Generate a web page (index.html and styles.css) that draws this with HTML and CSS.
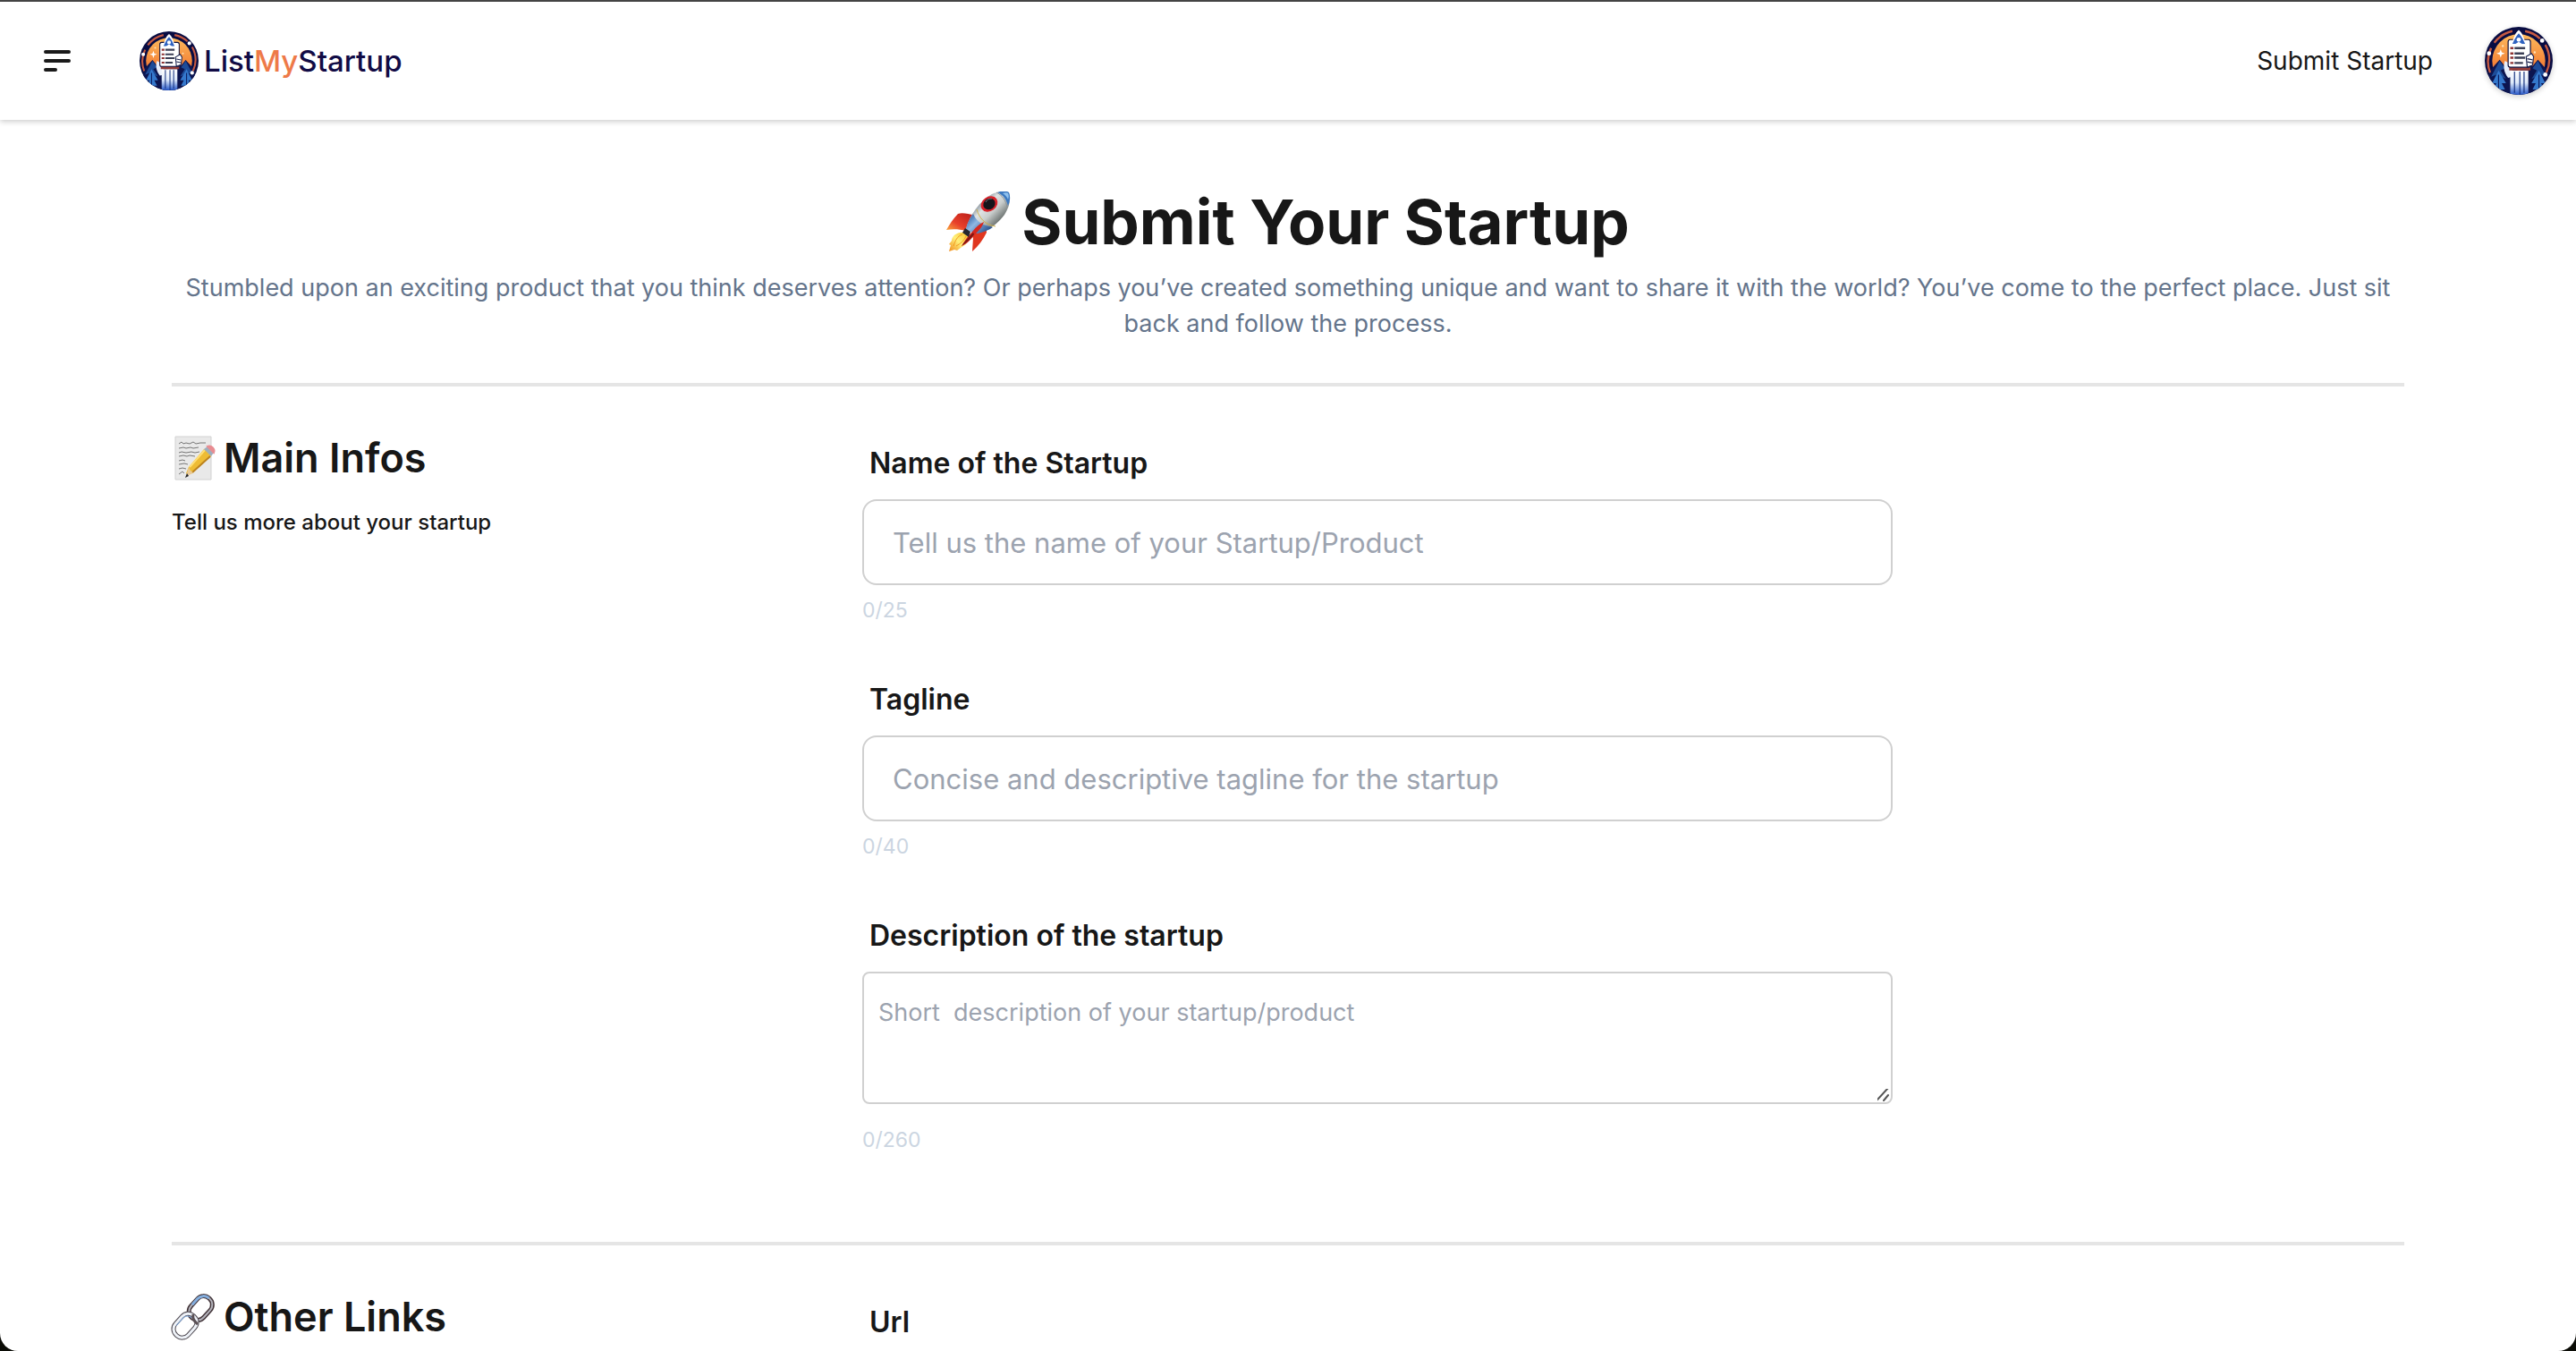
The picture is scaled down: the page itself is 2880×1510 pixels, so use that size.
FILE: index.html
```
<!DOCTYPE html>
<html lang="en">
<head>
	<meta charset="UTF-8">
	<title>ListMyStartup</title>
	<link rel="stylesheet" href="styles.css">
</head>
<body>
	<svg class="sprite" aria-hidden="true">
		<defs>
			<linearGradient id="sky" x1="0" y1="0" x2="0" y2="1">
				<stop offset="0" stop-color="#fdb95c"/>
				<stop offset=".5" stop-color="#f58a3c"/>
				<stop offset="1" stop-color="#dd4a36"/>
			</linearGradient>
			<linearGradient id="trail" x1="0" y1="0" x2="0" y2="1">
				<stop offset="0" stop-color="#fff"/>
				<stop offset=".5" stop-color="#dfeafa"/>
				<stop offset="1" stop-color="#2456c8"/>
			</linearGradient>
			<clipPath id="round"><circle cx="32" cy="32" r="32"/></clipPath>
		</defs>
		<symbol id="badge" viewBox="0 0 64 64">
			<g clip-path="url(#round)">
				<rect width="64" height="64" fill="#080c42"/>
				<circle cx="32" cy="32" r="25" fill="url(#sky)"/>
				<path d="M4 42L14 31l5 6 4-4 9 9 9-9 4 4 5-6 10 11v22H4z" fill="#0c1550"/>
				<path d="M14 32l5 7-4 2 5 8-9-4-5 2zM50 32l-5 7 4 2-5 8 9-4 5 2z" fill="#1d4c98"/>
				<path d="M13 41l7 12h-4l3 6H8l3-6H7zM51 41l-7 12h4l-3 6h11l-3-6h4z" fill="#3478cc"/>
				<path d="M13 45v16M51 45v16" stroke="#0a1c60"/>
				<path d="M5 43A29 29 0 0 1 6 20M9 15A29 29 0 0 1 26 4M38 4a29 29 0 0 1 14 7M57 17a29 29 0 0 1 1 26" fill="none" stroke="#c65a42" stroke-width="2"/>
				<path d="M19 32c-2 5-1 11 3 16l4-1V36z" fill="#e8effb"/>
				<path d="M24 41h17v23H24z" fill="url(#trail)"/>
				<path d="M28 42v20M33 42v22M37 42v20" stroke="#14307e"/>
				<path d="M23 37h20v4H23z" fill="#943c38"/>
				<rect x="22" y="12" width="21" height="26" rx="2" fill="#fff" stroke="#0b0e3c"/>
				<path d="M28 20h10M28 25h9M28 29h10M28 34h8" stroke="#3c4056" stroke-width="2"/>
				<path d="M24 20h3M24 25h3M24 29h3M24 34h3" stroke="#8e3434" stroke-width="2"/>
				<path d="M39 28l5-3 2 3-1 8-5 2z" fill="#fff" stroke="#18204c"/>
				<path d="M40 30l5 1M40 33l5 1" stroke="#18204c"/>
				<path d="M32 3c-4 3-4 7-7 13h14c-3-6-3-10-7-13z" fill="#fff"/>
				<path d="M32 6c-3 3-4 6-6 10h3l3-2 3 2h3c-2-4-3-7-6-10z" fill="#2e62c0"/>
				<circle cx="32" cy="12" r="2" fill="#fff"/>
				<path d="M15 21l1 3 3 1-3 1-1 3-1-3-3-1 3-1z" fill="#fff"/>
				<circle cx="17" cy="18" r="1" fill="#ffe0b4"/>
				<circle cx="47" cy="24" r="1" fill="#ffe0b4"/>
				<circle cx="4" cy="25" r="2" fill="#fff"/>
				<circle cx="54" cy="13" r="2" fill="#fff"/>
				<circle cx="57" cy="45" r="2" fill="#fff"/>
			</g>
		</symbol>
	</svg>

	<div class="window">
		<header class="navbar">
			<button class="menu" type="button" aria-label="Menu">
				<svg viewBox="0 0 30 24" width="30" height="24" fill="none" stroke="#1a1a1a" stroke-width="4" stroke-linecap="round">
					<path d="M2 2h26M2 12h26M2 22h11"/>
				</svg>
			</button>
			<a class="brand" href="#">
				<svg class="brand-logo" aria-hidden="true"><use href="#badge"/></svg>
				<span class="brand-name">List<span class="accent">My</span>Startup</span>
			</a>
			<a class="nav-link" href="#">Submit Startup</a>
			<button class="avatar" type="button" aria-label="Account">
				<svg aria-hidden="true"><use href="#badge"/></svg>
			</button>
		</header>

		<main class="page">
			<div class="intro">
				<h1>
					<svg class="rocket" viewBox="0 0 72 68" aria-hidden="true">
						<defs>
							<linearGradient id="hull" gradientUnits="userSpaceOnUse" x1="36" y1="12" x2="58" y2="34">
								<stop offset="0" stop-color="#7d8a94"/>
								<stop offset=".3" stop-color="#dfe3e4"/>
								<stop offset=".6" stop-color="#c9cdcc"/>
								<stop offset="1" stop-color="#6f7674"/>
							</linearGradient>
							<linearGradient id="belly" gradientUnits="userSpaceOnUse" x1="24" y1="28" x2="44" y2="48">
								<stop offset="0" stop-color="#3565a4"/>
								<stop offset=".4" stop-color="#8fb8e4"/>
								<stop offset="1" stop-color="#27508c"/>
							</linearGradient>
							<linearGradient id="fin" x1="1" y1="0" x2="0" y2="1">
								<stop offset="0" stop-color="#b81c18"/>
								<stop offset=".6" stop-color="#e8402a"/>
								<stop offset="1" stop-color="#fbb040"/>
							</linearGradient>
							<linearGradient id="flame" x1="1" y1="0" x2="0" y2="1">
								<stop offset="0" stop-color="#f7c22c"/>
								<stop offset=".5" stop-color="#fff07a"/>
								<stop offset="1" stop-color="#f08a1c"/>
							</linearGradient>
						</defs>
						<path d="M31 26c-6 0-12-3-18-1C8 30 4 36 0 43c7-1 14-1 22 1z" fill="url(#fin)"/>
						<path d="M42 36c2 4 3 7 3 10-4 8-9 15-16 21l1-15-2-4z" fill="#e0361f"/>
						<path d="M20 46C12 45 6 50 6 55l-3 4 2 1-2 7 6-2 3 1 4-3c6-3 9-7 9-12z" fill="url(#flame)"/>
						<path d="M18 48c-6 2-8 7-10 13M22 50c-3 6-6 8-11 11" fill="none" stroke="#f39a1f"/>
						<path d="M22 42C26 26 38 10 51 3c7-3 14-4 19-2 3 8 0 17-5 25-8 11-21 20-34 21z" fill="url(#hull)"/>
						<path d="M30 25c3 7 9 13 22 15-6 4-13 7-21 7l-9-5c1-6 4-12 8-17z" fill="url(#belly)"/>
						<path d="M57 1c5-2 10-2 13 0 2 5 1 10-1 15C67 9 64 4 57 1z" fill="#3c78bf"/>
						<path d="M63 2c3-1 5-1 6 0 1 2 1 4 0 7-1-3-3-5-6-7z" fill="#8ec0ee"/>
						<path d="M34 20c3 10 9 17 21 19" fill="none" stroke="#cfb24c"/>
						<path d="M56 1c6 3 11 9 12 17" fill="none" stroke="#8c9296"/>
						<ellipse cx="48" cy="14" rx="10" ry="8" transform="rotate(-35 48 14)" fill="#d8222a"/>
						<ellipse cx="48" cy="14" rx="7" ry="6" transform="rotate(-35 48 14)" fill="#15151a"/>
						<path d="M44 12c1-3 4-4 7-4" fill="none" stroke="#6c7078"/>
						<path d="M42 34c-7 3-10 8-15 13-4 4-7 9-10 14 7-3 11-8 15-13 5-5 8-8 10-14z" fill="#d5281f"/>
						<path d="M30 46c-4 4-9 9-13 15 6-4 10-8 14-13z" fill="#7c1612"/>
						<path d="M21 41l6 4-2 6-7-5z" fill="#23272e"/>
					</svg>
					Submit Your Startup
				</h1>
				<p>Stumbled upon an exciting product that you think deserves attention? Or perhaps you’ve created something unique and want to share it with the world? You’ve come to the perfect place. Just sit back and follow the process.</p>
			</div>

			<section class="section">
				<div class="section-info">
					<h2>
						<svg class="emoji" viewBox="0 0 48 48" aria-hidden="true">
							<path d="M4 0h40v48H4z" fill="#e9e9e9" stroke="#d2d2d2"/>
							<path d="M8 8l3-2 2 2 3-1 4 1 4-2 3 2 5-1 6 0M8 13l5-1 3 1 5-1 3 1 6-1M8 18l3-1 5 1 6-1 4 1 5-1M8 22l5-1 4 1 3-1 6 1M8 27l4-1 3 1M8 31l6-1 4 1M8 36l4-1 4 1M8 42l4-3 2 2" fill="none" stroke="#777"/>
							<path d="M18 43l5-2L44 22l-3-6-5-2-17 20-3 7z" fill="#eebc35"/>
							<path d="M20 34l17-19" stroke="#ffdf78" stroke-width="2"/>
							<path d="M23 40l20-18" stroke="#bb8220" stroke-width="2"/>
							<path d="M19 34c1 3 2 5 5 6l-8 5z" fill="#e8c998"/>
							<path d="M17 41l2 3-4 2z" fill="#222"/>
							<path d="M36 14l4-3 7 7-3 4z" fill="#9daebd"/>
							<path d="M40 11c4-2 9 3 7 7z" fill="#e88d92" stroke="#e88d92" stroke-width="2"/>
						</svg>
						Main Infos
					</h2>
					<p>Tell us more about your startup</p>
				</div>
				<form class="fields">
					<div class="field">
						<label for="name">Name of the Startup</label>
						<input id="name" type="text" maxlength="25" placeholder="Tell us the name of your Startup/Product">
						<span class="count">0/25</span>
					</div>
					<div class="field">
						<label for="tagline">Tagline</label>
						<input id="tagline" type="text" maxlength="40" placeholder="Concise and descriptive tagline for the startup">
						<span class="count">0/40</span>
					</div>
					<div class="field">
						<label for="description">Description of the startup</label>
						<textarea id="description" maxlength="260" placeholder="Short  description of your startup/product"></textarea>
						<span class="count">0/260</span>
					</div>
				</form>
			</section>

			<section class="section">
				<div class="section-info">
					<h2>
						<svg class="emoji" viewBox="0 0 48 48" fill="none" aria-hidden="true">
							<g transform="rotate(42 33 14)">
								<rect x="23" y="0" width="19" height="29" rx="9" stroke="#43353a" stroke-width="5"/>
								<rect x="23" y="0" width="19" height="29" rx="9" stroke="#b4b4bc" stroke-width="2"/>
								<path d="M23 18V9a9 9 0 0 1 9-9" stroke="#84aede" stroke-width="3"/>
							</g>
							<g transform="rotate(42 15 33)">
								<rect x="6" y="19" width="19" height="29" rx="9" stroke="#4f4a52" stroke-width="5"/>
								<rect x="6" y="19" width="19" height="29" rx="9" stroke="#eef2f8" stroke-width="3"/>
								<path d="M8 40V29a7 7 0 0 1 7-7" stroke="#7ca4d6"/>
							</g>
							<path d="M24 21c-1 4 1 8 5 11" stroke="#5a5055" stroke-width="3"/>
						</svg>
						Other Links
					</h2>
				</div>
				<form class="fields">
					<div class="field">
						<label for="url">Url</label>
						<input id="url" type="url">
					</div>
				</form>
			</section>
		</main>
	</div>
</body>
</html>
```
FILE: styles.css
```
*{
	margin: 0;
	padding: 0;
	box-sizing: border-box;
}
body{
	background-color: #0b0c06;
	font-family: Inter, "Liberation Sans", sans-serif;
	color: #171717;
}
a{
	color: inherit;
	text-decoration: none;
}
button{
	background: none;
	border: none;
	cursor: pointer;
}
svg{
	display: block;
}
.sprite{
	position: absolute;
	width: 0;
	height: 0;
}
.window{
	height: 100vh;
	overflow-y: auto;
	scrollbar-width: none;
	background-color: #fff;
	border-top: 2px solid #444;
	border-radius: 0 0 20px 20px;
}

/* navbar */
.navbar{
	display: flex;
	align-items: center;
	height: 132px;
	padding: 0 26px 0 49px;
	box-shadow: 0 2px 6px rgba(0, 0, 0, .2);
}
.brand{
	display: flex;
	align-items: center;
	gap: 6px;
	margin-left: 77px;
}
.brand-logo{
	width: 66px;
	height: 66px;
}
.brand-name{
	font-size: 33px;
	font-weight: 500;
	color: #110b45;
}
.accent{
	color: #ee7a48;
}
.nav-link{
	margin-left: auto;
	font-size: 28px;
}
.avatar{
	margin-left: 58px;
	border-radius: 50%;
	box-shadow: 0 2px 6px rgba(0, 0, 0, .2);
}
.avatar svg{
	width: 76px;
	height: 76px;
}

/* page */
.page{
	padding: 72px 192px;
}
.intro{
	text-align: center;
	padding-bottom: 46px;
}
h1{
	display: flex;
	align-items: center;
	justify-content: center;
	gap: 12px;
	font-size: 69px;
	font-weight: 700;
	line-height: 84px;
}
.rocket{
	width: 72px;
	height: 68px;
}
.intro p{
	margin-top: 12px;
	font-size: 27px;
	line-height: 40px;
	color: #64748b;
}
.section{
	display: grid;
	grid-template-columns: 740px 1fr;
	gap: 32px;
	border-top: 4px solid #e5e5e5;
	padding: 48px 0 98px;
}
h2{
	display: flex;
	align-items: center;
	gap: 10px;
	font-size: 45px;
	font-weight: 600;
	line-height: 64px;
}
.emoji{
	width: 48px;
	height: 48px;
	overflow: visible;
}
.section-info p{
	margin-top: 24px;
	font-size: 24px;
	font-weight: 500;
	line-height: 32px;
}

/* form */
.fields{
	display: flex;
	flex-direction: column;
	gap: 60px;
	max-width: 1152px;
	padding-top: 14px;
}
.field{
	display: flex;
	flex-direction: column;
}
label{
	padding: 0 8px 16px;
	font-size: 32px;
	font-weight: 600;
	line-height: 48px;
}
input,
textarea{
	width: 100%;
	border: 2px solid #d0d0d0;
	background-color: #fff;
	font-family: inherit;
	color: inherit;
}
input{
	height: 96px;
	padding: 0 32px;
	border-radius: 16px;
	font-size: 31px;
}
textarea{
	height: 148px;
	padding: 24px 16px;
	border-radius: 8px;
	font-size: 27px;
	line-height: 40px;
	resize: vertical;
}
textarea::-webkit-scrollbar{
	width: 18px;
	height: 18px;
}
textarea::-webkit-resizer{
	background: url("data:image/svg+xml,%3Csvg xmlns='http://www.w3.org/2000/svg' width='18' height='18' stroke='%23555' stroke-width='2' stroke-linecap='round'%3E%3Cpath d='M2 16L15 2M10 16l5-6'/%3E%3C/svg%3E") no-repeat right bottom;
}
input::placeholder,
textarea::placeholder{
	color: #9ca3af;
}
.count{
	margin-top: 12px;
	font-size: 23px;
	line-height: 32px;
	color: #cbd5e1;
}
textarea + .count{
	margin-top: 24px;
}
```
